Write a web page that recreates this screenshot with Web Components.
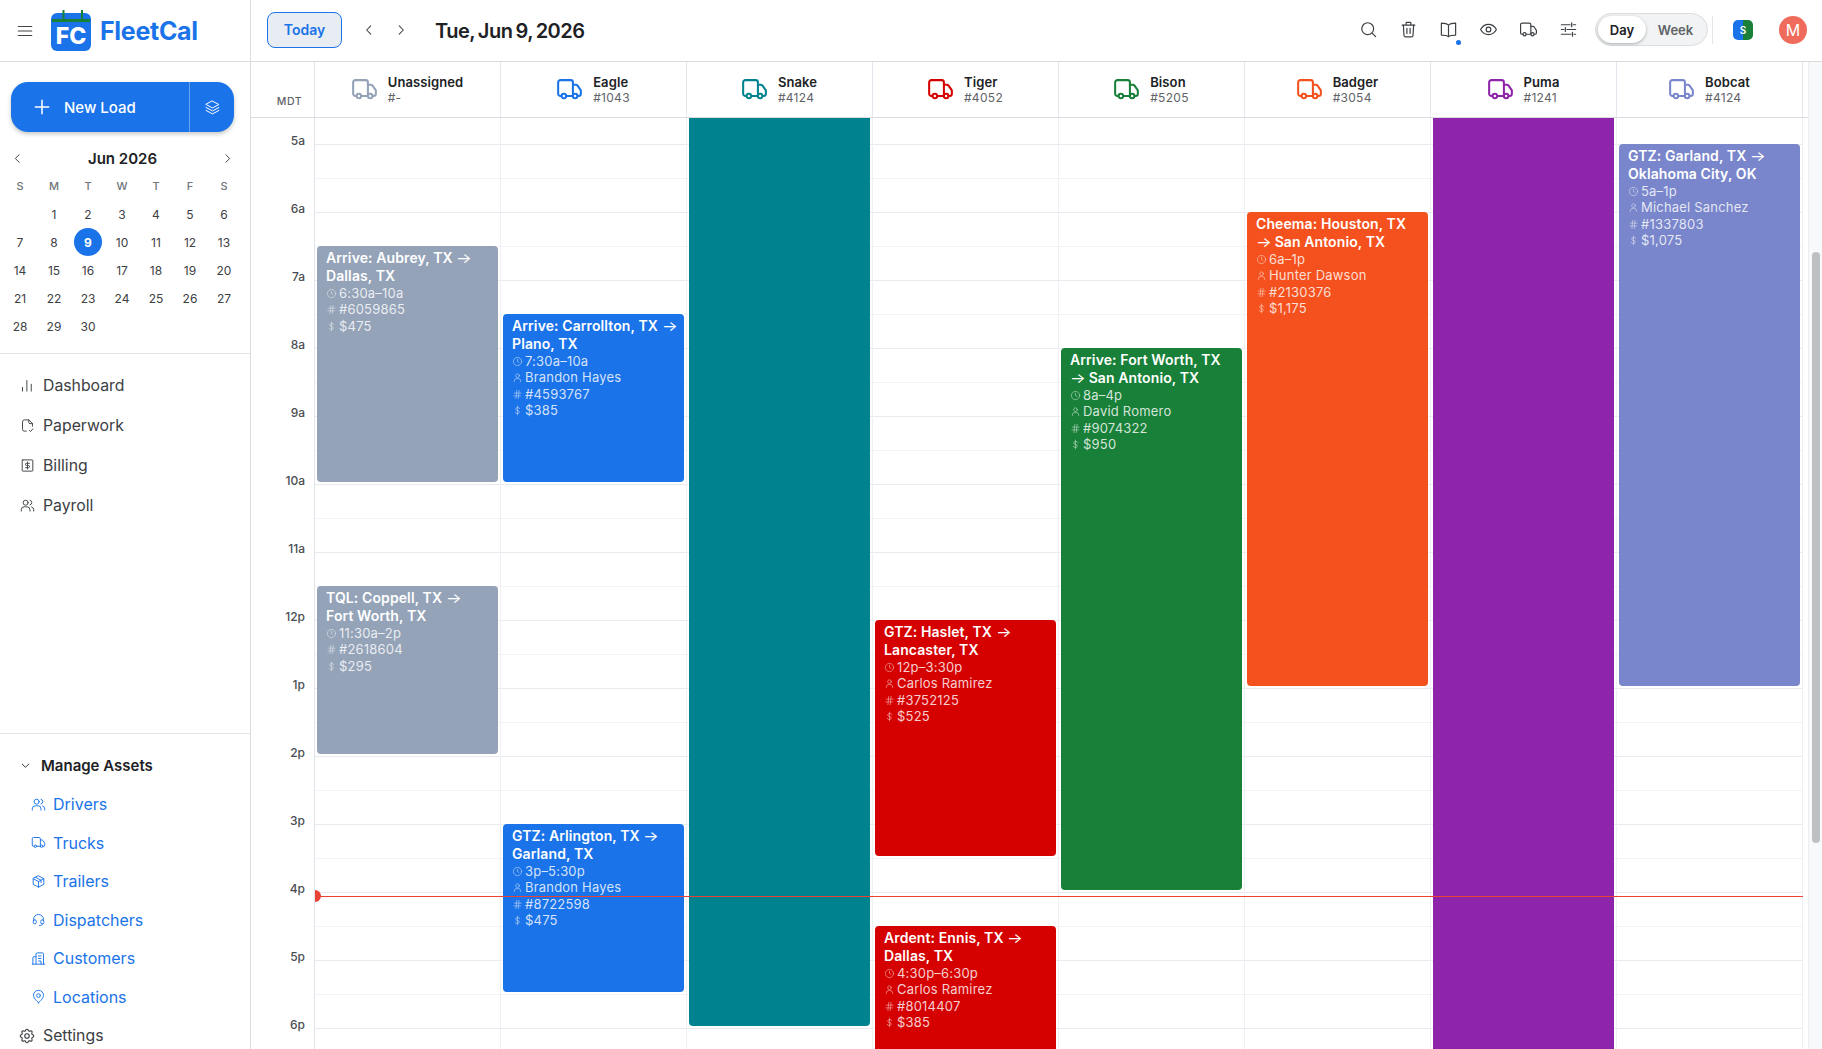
<!DOCTYPE html>
<html lang="en">
<head>
<meta charset="utf-8">
<title>FleetCal</title>
<style>
  html, body { margin: 0; height: 100%; overflow: hidden; background: #fff; }
  body { font-family: Inter, "Liberation Sans", sans-serif; color: #202124; }
</style>
</head>
<body>
<fleet-app></fleet-app>

<script>
const BLUE = "#1a73e8";

const ICONS = {
  menu: '<path d="M3 6h18M3 12h18M3 18h18"/>',
  plus: '<path d="M12 4v16M4 12h16"/>',
  layers: '<path d="M12 3l9 4.8-9 4.8-9-4.8z"/><path d="M3 12l9 4.8 9-4.8"/><path d="M3 16.2L12 21l9-4.8"/>',
  left: '<path d="M15 5l-7 7 7 7"/>',
  right: '<path d="M9 5l7 7-7 7"/>',
  down: '<path d="M5 9l7 7 7-7"/>',
  chart: '<path d="M4 21v-6M11 21V4M18 21V10"/>',
  paper: '<path d="M10 21H7a3 3 0 0 1-3-3V6a3 3 0 0 1 3-3h7l6 6v4"/><path d="M14 3v4a2 2 0 0 0 2 2h4"/><path d="M15 20l2 1.5 3.500-4"/>',
  bill: '<rect x="3.500" y="3" width="17" height="18" rx="1"/><path d="M15 8.500h-4.500a1.700 1.700 0 0 0 0 3.500h3a1.700 1.700 0 0 1 0 3.500H9M12 6.500v11"/>',
  users: '<circle cx="9" cy="7.500" r="4"/><path d="M2 21v-2a5 5 0 0 1 5-5h4a5 5 0 0 1 5 5v2"/><path d="M16 3.500a4 4 0 0 1 0 7.700M22 21v-2a5 5 0 0 0-3.500-4.800"/>',
  truck: '<path d="M5 18H4a2 2 0 0 1-2-2V6a2 2 0 0 1 2-2h9a2 2 0 0 1 2 2v12M9 18h6"/><path d="M15 8h2.500a2 2 0 0 1 1.600.8L22 13v3a2 2 0 0 1-2 2h-1"/><circle cx="7" cy="18" r="2"/><circle cx="17" cy="18" r="2"/>',
  box: '<path d="M12 3l8.500 4.500v9L12 21l-8.500-4.500v-9z"/><path d="M3.500 7.500L12 12l8.500-4.500M12 12v9M7.500 5.300l8.500 4.600v4"/>',
  headset: '<path d="M4 14v-2a8 8 0 0 1 16 0v2"/><rect x="3.500" y="12.500" width="5" height="6.500" rx="2.500"/><rect x="15.500" y="12.500" width="5" height="6.500" rx="2.500"/><path d="M19 19c0 1.800-2.500 2.500-5.500 2.500"/>',
  building: '<path d="M8 21V5a2 2 0 0 1 2-2h8a2 2 0 0 1 2 2v16"/><path d="M3 21V11a2 2 0 0 1 2-2h3M2 21h20M12 8h4M12 12h4M12 16h4v5"/>',
  pin: '<circle cx="12" cy="10.500" r="3"/><path d="M12 22s-8-6.500-8-12a8 8 0 0 1 16 0c0 5.500-8 12-8 12z"/>',
  gear: '<path d="M10.325 4.317c.426-1.756 2.924-1.756 3.35 0a1.724 1.724 0 0 0 2.573 1.066c1.543-.94 3.31.826 2.37 2.37a1.724 1.724 0 0 0 1.065 2.572c1.756.426 1.756 2.924 0 3.35a1.724 1.724 0 0 0-1.066 2.573c.94 1.543-.826 3.31-2.37 2.37a1.724 1.724 0 0 0-2.572 1.065c-.426 1.756-2.924 1.756-3.35 0a1.724 1.724 0 0 0-2.573-1.066c-1.543.94-3.31-.826-2.37-2.37a1.724 1.724 0 0 0-1.065-2.572c-1.756-.426-1.756-2.924 0-3.35a1.724 1.724 0 0 0 1.066-2.573c-.94-1.543.826-3.31 2.37-2.37c1 .608 2.296.07 2.572-1.065z"/><circle cx="12" cy="12" r="3"/>',
  search: '<circle cx="11" cy="11" r="7.500"/><path d="M16.500 16.500L21 21"/>',
  trash: '<path d="M4 6.500h16M9 6V4a1 1 0 0 1 1-1h4a1 1 0 0 1 1 1v2"/><path d="M5.500 6.500l.8 13a2 2 0 0 0 2 1.800h7.400a2 2 0 0 0 2-1.800l.8-13"/><path d="M10 10.500v6.500M14 10.500v6.500"/>',
  book: '<path d="M12 6.500C10.500 5 8 4 3 4v15c5 0 7.500.8 9 2 1.500-1.200 4-2 9-2V4c-5 0-7.500 1-9 2.500zM12 6.500V21"/>',
  eye: '<circle cx="12" cy="12" r="3"/><path d="M2 12c2.500-4.500 6-6.500 10-6.500s7.500 2 10 6.500c-2.500 4.500-6 6.500-10 6.500S4.500 16.500 2 12z"/>',
  sliders: '<path d="M3 6h11M18 6h3M3 12h3M10 12h11M3 18h12M19 18h2"/><path d="M16 3.500v5M8 9.500v5M17 15.500v5"/>',
  clock: '<circle cx="12" cy="12" r="9"/><path d="M12 7v5l3 2"/>',
  user: '<circle cx="12" cy="8" r="4"/><path d="M5 21v-1a6 6 0 0 1 6-6h2a6 6 0 0 1 6 6v1"/>',
  hash: '<path d="M5 9h15M4 15h15M10.500 3L8.500 21M15.500 3l-2 18"/>',
  dollar: '<path d="M17 8a4 3.500 0 0 0-4-2.500h-2A3.300 3.300 0 0 0 11 12h2a3.300 3.300 0 0 1 0 6.500h-2A4 3.500 0 0 1 7 16M12 2.500v19"/>'
};

function icon(name, size, stroke) {
  return `<svg width="${size}" height="${size}" viewBox="0 0 24 24" fill="none" stroke="currentColor" stroke-width="${stroke || 1.7}" stroke-linecap="round" stroke-linejoin="round" aria-hidden="true">${ICONS[name]}</svg>`;
}

// sidebar link, tone="asset" is the blue indented kind
class NavLink extends HTMLElement {
  connectedCallback() {
    this.attachShadow({ mode: "open" });
    const name = this.getAttribute("icon");
    this.shadowRoot.innerHTML = `
      <style>
        :host { display: flex; align-items: center; height: 40px; padding-left: 20px; gap: 8px; font-size: 15.800px; color: #3c4043; }
        :host([tone="asset"]) { height: 38.500px; padding-left: 31px; gap: 7px; font-size: 16px; color: ${BLUE}; }
        svg { flex: none; }
        :host([icon="gear"]) svg { margin: 0 -.500px 0 -2.500px; }
      </style>
      ${icon(name, name === "gear" ? 18 : 15, 1.5)}
      <slot></slot>
    `;
  }
}

class MiniCalendar extends HTMLElement {
  connectedCallback() {
    this.attachShadow({ mode: "open" });
    const week = ["S", "M", "T", "W", "T", "F", "S"].map((d) => `<span class="wd">${d}</span>`).join("");
    let days = "<span></span>";
    for (let d = 1; d <= 30; d++) {
      days += `<span class="${d === 9 ? "day today" : "day"}">${d}</span>`;
    }
    this.shadowRoot.innerHTML = `
      <style>
        :host { display: block; padding: 12px 3px 14px; border-bottom: 1px solid #e3e5e8; height: 195px; box-sizing: content-box; }
        .head { display: flex; align-items: center; justify-content: space-between; width: 225px; height: 28px; margin-left: 8px; color: #3c4043; }
        .head svg:last-child { margin-right: 2px; }
        .title { font-size: 15px; font-weight: 600; color: #202124; }
        .grid { display: grid; grid-template-columns: repeat(7, 34px); grid-auto-rows: 28px; justify-items: center; align-items: center; font-size: 12px; }
        .wd { font-size: 11px; font-weight: 500; color: #70757a; }
        .day { color: #3c4043; }
        .today { width: 28px; height: 28px; border-radius: 50%; background: ${BLUE}; color: #fff; font-weight: 700; display: flex; align-items: center; justify-content: center; }
      </style>
      <div class="head">
        ${icon("left", 13, 1.8)}
        <span class="title">Jun 2026</span>
        ${icon("right", 13, 1.8)}
      </div>
      <div class="grid">${week}${days}</div>
    `;
  }
}

class FleetSidebar extends HTMLElement {
  connectedCallback() {
    this.attachShadow({ mode: "open" });
    this.shadowRoot.innerHTML = `
      <style>
        :host { display: block; flex: none; box-sizing: border-box; width: 251px; height: 100vh; border-right: 1px solid #dadce0; overflow: hidden; background: #fff; }
        .brand { display: flex; align-items: center; height: 61px; border-bottom: 1px solid #dadce0; padding-left: 16px; }
        .brand .burger { color: #444; display: flex; margin-right: 16px; }
        .brand .name { margin-left: 8px; font-size: 25px; font-weight: 700; color: ${BLUE}; letter-spacing: -.3px; }
        .new { display: flex; align-items: stretch; height: 50px; margin: 20px 16px 0 11px; border-radius: 17px; background: ${BLUE}; color: #fff; box-shadow: 0 2px 4px rgba(60,64,67,.3); }
        .new .main { flex: 1; display: flex; align-items: center; gap: 12px; padding-left: 21px; font-size: 15px; font-weight: 500; }
        .new .side { width: 44px; border-left: 1px solid rgba(255,255,255,.35); display: flex; align-items: center; justify-content: center; }
        .links { height: 368px; padding-top: 11px; border-bottom: 1px solid #e3e5e8; box-sizing: content-box; }
        .group { display: flex; align-items: center; gap: 10px; height: 38px; margin: 12px 0 .800px; padding-left: 20px; font-size: 15px; font-weight: 600; color: #202124; }
      </style>
      <div class="brand">
        <span class="burger">${icon("menu", 18, 1.500)}</span>
        <svg width="42" height="42" viewBox="0 0 42 42" aria-hidden="true">
          <rect x="1" y="3" width="40" height="38" rx="6" fill="${BLUE}"/>
          <rect x="2" y="9" width="38" height="3" fill="#188038"/>
          <rect x="12.500" y="0" width="2" height="11" fill="#188038"/>
          <rect x="31" y="0" width="2" height="11" fill="#188038"/>
          <text x="21" y="34" text-anchor="middle" font-family="Inter, sans-serif" font-size="23" font-weight="800" fill="#fff">FC</text>
        </svg>
        <span class="name">FleetCal</span>
      </div>
      <div class="new">
        <div class="main">${icon("plus", 20, 1.8)}<span>New Load</span></div>
        <div class="side">${icon("layers", 17, 1.4)}</div>
      </div>
      <mini-calendar></mini-calendar>
      <div class="links">
        <nav-link icon="chart">Dashboard</nav-link>
        <nav-link icon="paper">Paperwork</nav-link>
        <nav-link icon="bill">Billing</nav-link>
        <nav-link icon="users">Payroll</nav-link>
      </div>
      <div class="group">${icon("down", 11, 2)}<span>Manage Assets</span></div>
      <nav-link tone="asset" icon="users">Drivers</nav-link>
      <nav-link tone="asset" icon="truck">Trucks</nav-link>
      <nav-link tone="asset" icon="box">Trailers</nav-link>
      <nav-link tone="asset" icon="headset">Dispatchers</nav-link>
      <nav-link tone="asset" icon="building">Customers</nav-link>
      <nav-link tone="asset" icon="pin">Locations</nav-link>
      <nav-link icon="gear">Settings</nav-link>
    `;
  }
}

class TopBar extends HTMLElement {
  connectedCallback() {
    this.attachShadow({ mode: "open" });
    const tools = ["search", "trash", "book", "eye", "truck", "sliders"]
      .map((n) => `<span class="tool">${icon(n, 19, 1.500)}${n === "book" ? '<i class="dot"></i>' : ""}</span>`)
      .join("");
    this.shadowRoot.innerHTML = `
      <style>
        :host { display: flex; align-items: center; flex: none; height: 62px; box-sizing: border-box; border-bottom: 1px solid #dadce0; padding: 0 0 2px 16px; background: #fff; }
        .today { box-sizing: border-box; width: 75px; height: 36px; border: 1px solid ${BLUE}; border-radius: 8px; background: #e8edf3; color: ${BLUE}; font-size: 14px; font-weight: 600; display: flex; align-items: center; justify-content: center; }
        .arrow { display: flex; width: 32px; justify-content: center; color: #3c4043; }
        .arrows { display: flex; margin: 0 18px 0 11px; }
        .date { margin-top: 2px; font-size: 20px; font-weight: 600; color: #202124; letter-spacing: -.5px; word-spacing: -1.500px; white-space: nowrap; }
        .tools { margin-left: auto; display: flex; align-items: center; color: #3c4043; }
        .tool { position: relative; display: flex; width: 40px; justify-content: center; }
        .dot { position: absolute; right: 7px; top: 20px; width: 5px; height: 5px; border-radius: 50%; background: ${BLUE}; }
        .pill { box-sizing: border-box; display: flex; align-items: center; width: 113px; height: 33px; margin-left: 7px; padding: 2px; border: 1px solid #dadce0; border-radius: 17px; background: #f1f3f4; font-size: 13px; font-weight: 600; color: #5f6368; }
        .pill span { display: flex; align-items: center; justify-content: center; height: 27px; }
        .pill .on { width: 48px; border-radius: 14px; background: #fff; color: #202124; box-shadow: 0 1px 3px rgba(60,64,67,.4); }
        .pill .off { flex: 1; }
        .rule { width: 1px; height: 28px; margin: 0 20px 0 4px; background: #e3e5e8; }
        .s { width: 20px; height: 20px; border-radius: 5px; background: linear-gradient(90deg, ${BLUE} 50%, #188038 50%); color: #fff; font-size: 10px; font-weight: 600; display: flex; align-items: center; justify-content: center; }
        .me { width: 28px; height: 28px; margin: 0 15px 0 26px; border-radius: 50%; background: #ef6b5b; color: #fff; font-size: 16px; display: flex; align-items: center; justify-content: center; }
      </style>
      <div class="today">Today</div>
      <div class="arrows">
        <span class="arrow">${icon("left", 14, 1.8)}</span>
        <span class="arrow">${icon("right", 14, 1.8)}</span>
      </div>
      <div class="date">Tue, Jun 9, 2026</div>
      <div class="tools">
        ${tools}
        <div class="pill"><span class="on">Day</span><span class="off">Week</span></div>
        <div class="rule"></div>
        <div class="s">S</div>
        <div class="me">M</div>
      </div>
    `;
  }
}

class TruckHead extends HTMLElement {
  connectedCallback() {
    this.attachShadow({ mode: "open" });
    this.shadowRoot.innerHTML = `
      <style>
        :host { display: flex; align-items: center; justify-content: center; gap: 11px; border-right: 1px solid #e3e6ec; }
        svg { flex: none; }
        .name { font-size: 13px; font-weight: 600; line-height: 16px; color: #202124; letter-spacing: .1px; }
        .num { font-size: 12px; line-height: 16px; color: #5f6368; letter-spacing: .3px; }
      </style>
      <svg width="25" height="21" viewBox="1 3 22 18.500" fill="none" stroke="${this.getAttribute("color")}" stroke-width="1.800" stroke-linecap="round" stroke-linejoin="round" aria-hidden="true">${ICONS.truck}</svg>
      <div>
        <div class="name">${this.getAttribute("name")}</div>
        <div class="num">${this.getAttribute("num")}</div>
      </div>
    `;
  }
}

// start/end are hours from midnight, the lane has one row per half hour
class LoadCard extends HTMLElement {
  connectedCallback() {
    this.attachShadow({ mode: "open" });
    const start = parseFloat(this.getAttribute("start"));
    const end = parseFloat(this.getAttribute("end"));
    this.style.gridRow = `${start * 2 + 1} / ${end * 2 + 1}`;
    const row = (name, value) => value ? `<div class="row">${icon(name, 11, 1.6)}<span>${value}</span></div>` : "";
    this.shadowRoot.innerHTML = `
      <style>
        :host { display: block; min-height: 0; margin-bottom: 2px; border-radius: 4px; overflow: hidden; background: var(--lane); color: #fff; padding: 3px 6px 3px 9px; box-sizing: border-box; }
        .title { font-size: 14px; font-weight: 600; line-height: 18px; letter-spacing: .1px; }
        .row { display: flex; align-items: center; gap: 2px; font-size: 13px; line-height: 16.400px; color: rgba(255,255,255,.82); letter-spacing: .2px; white-space: nowrap; }
        svg { flex: none; opacity: .72; }
      </style>
      <div class="title"><slot></slot></div>
      ${row("clock", this.getAttribute("time"))}
      ${row("user", this.getAttribute("driver"))}
      ${row("hash", this.getAttribute("ref"))}
      ${row("dollar", this.getAttribute("pay"))}
    `;
  }
}

class TruckLane extends HTMLElement {
  connectedCallback() {
    this.attachShadow({ mode: "open" });
    this.shadowRoot.innerHTML = `
      <style>
        :host {
          display: grid;
          grid-template-rows: repeat(48, 34px);
          padding: 0 2px;
          border-right: 1px solid #eef0f4;
          background: repeating-linear-gradient(to bottom, #e8ebf0 0 1px, transparent 1px 34px, #f2f3f6 34px 35px, transparent 35px 68px);
        }
      </style>
      <slot></slot>
    `;
  }
}

class TimeGutter extends HTMLElement {
  connectedCallback() {
    this.attachShadow({ mode: "open" });
    let cells = "";
    for (let h = 1; h < 24; h++) {
      let label = "";
      if (h >= 5 && h <= 18) label = h < 12 ? h + "a" : h === 12 ? "12p" : (h - 12) + "p";
      cells += `<div class="cell"><span>${label}</span></div>`;
    }
    this.shadowRoot.innerHTML = `
      <style>
        :host { display: block; box-sizing: border-box; padding-top: 3px; border-right: 1px solid #dfe3ea; background: #fff; }
        .cell { box-sizing: border-box; height: 68px; padding-right: 9px; display: flex; justify-content: flex-end; align-items: flex-end; }
        span { font-size: 12px; line-height: 12px; font-weight: 500; color: #4a4d52; }
      </style>
      ${cells}
    `;
  }
}

class DayBoard extends HTMLElement {
  connectedCallback() {
    this.attachShadow({ mode: "open" });
    this.shadowRoot.innerHTML = `
      <style>
        :host { display: flex; flex: 1; min-height: 0; }
        .scroller { flex: 1; min-width: 0; overflow-y: auto; overflow-x: hidden; background: #fff; scrollbar-width: none; }
        .rail { flex: none; box-sizing: border-box; width: 14px; padding: 190px 2px 0 3px; background: #f8f9fa; border-left: 1px solid #eceef2; }
        .thumb { height: 591px; border-radius: 4px; background: #bdc1c1; }
        .head { position: sticky; top: 0; z-index: 3; box-sizing: border-box; display: grid; grid-template-columns: 64px repeat(8, 186px); height: 56px; border-bottom: 1px solid #dadce0; background: #fff; }
        .zone { border-right: 1px solid #dfe3ea; font-size: 10.500px; letter-spacing: .5px; color: #5f6368; display: flex; align-items: flex-end; justify-content: flex-end; padding: 0 12px 9px 0; font-weight: 500; }
        .body { position: relative; display: grid; grid-template-columns: 64px repeat(8, 186px); width: 1552px; }
        .now { position: absolute; z-index: 2; left: 64px; right: 0; top: 1092px; height: 1px; background: #ea4335; }
        .now::before { content: ""; position: absolute; left: 0; top: -6px; width: 6px; height: 12px; border-radius: 0 6px 6px 0; background: #ea4335; }
        .arr { display: inline-block; width: 15px; font-weight: 400; transform: scaleX(1.180); transform-origin: left center; }
      </style>
      <div class="scroller">
        <div class="head">
          <div class="zone">MDT</div>
          <truck-head name="Unassigned" num="#-" color="#94a3b8"></truck-head>
          <truck-head name="Eagle" num="#1043" color="#1a73e8"></truck-head>
          <truck-head name="Snake" num="#4124" color="#00838f"></truck-head>
          <truck-head name="Tiger" num="#4052" color="#d50000"></truck-head>
          <truck-head name="Bison" num="#5205" color="#188038"></truck-head>
          <truck-head name="Badger" num="#3054" color="#f4511e"></truck-head>
          <truck-head name="Puma" num="#1241" color="#8e24aa"></truck-head>
          <truck-head name="Bobcat" num="#4124" color="#7986cb"></truck-head>
        </div>
        <div class="body">
          <time-gutter></time-gutter>
          <truck-lane style="--lane:#94a3b8">
            <load-card start="6.5" end="10" time="6:30a–10a" ref="#6059865" pay="$475">Arrive: Aubrey, TX <span class="arr">→</span> Dallas, TX</load-card>
            <load-card start="11.5" end="14" time="11:30a–2p" ref="#2618604" pay="$295">TQL: Coppell, TX <span class="arr">→</span> Fort&nbsp;Worth, TX</load-card>
          </truck-lane>
          <truck-lane style="--lane:#1a73e8">
            <load-card start="7.5" end="10" time="7:30a–10a" driver="Brandon Hayes" ref="#4593767" pay="$385">Arrive: Carrollton, TX <span class="arr">→</span> Plano, TX</load-card>
            <load-card start="15" end="17.5" time="3p–5:30p" driver="Brandon Hayes" ref="#8722598" pay="$475">GTZ: Arlington, TX <span class="arr">→</span> Garland, TX</load-card>
          </truck-lane>
          <truck-lane style="--lane:#00838f">
            <load-card start="0" end="18"></load-card>
          </truck-lane>
          <truck-lane style="--lane:#d50000">
            <load-card start="12" end="15.5" time="12p–3:30p" driver="Carlos Ramirez" ref="#3752125" pay="$525">GTZ: Haslet, TX <span class="arr">→</span> Lancaster, TX</load-card>
            <load-card start="16.5" end="18.5" time="4:30p–6:30p" driver="Carlos Ramirez" ref="#8014407" pay="$385">Ardent: Ennis, TX <span class="arr">→</span> Dallas, TX</load-card>
          </truck-lane>
          <truck-lane style="--lane:#188038">
            <load-card start="8" end="16" time="8a–4p" driver="David Romero" ref="#9074322" pay="$950">Arrive: Fort Worth, TX <span class="arr">→</span> San Antonio, TX</load-card>
          </truck-lane>
          <truck-lane style="--lane:#f4511e">
            <load-card start="6" end="13" time="6a–1p" driver="Hunter Dawson" ref="#2130376" pay="$1,175">Cheema: Houston, TX <span class="arr">→</span> San Antonio, TX</load-card>
          </truck-lane>
          <truck-lane style="--lane:#8e24aa">
            <load-card start="0" end="23"></load-card>
          </truck-lane>
          <truck-lane style="--lane:#7986cb">
            <load-card start="5" end="13" time="5a–1p" driver="Michael Sanchez" ref="#1337803" pay="$1,075">GTZ: Garland, TX <span class="arr">→</span> Oklahoma City, OK</load-card>
          </truck-lane>
          <div class="now"></div>
        </div>
      </div>
      <div class="rail"><div class="thumb"></div></div>
    `;
    // opens scrolled so 5a sits just under the truck header
    this.shadowRoot.querySelector(".scroller").scrollTop = 314;
  }
}

class FleetApp extends HTMLElement {
  connectedCallback() {
    this.attachShadow({ mode: "open" });
    this.shadowRoot.innerHTML = `
      <style>
        :host { display: flex; height: 100vh; overflow: hidden; font-family: Inter, "Liberation Sans", sans-serif; }
        main { flex: 1; min-width: 0; display: flex; flex-direction: column; }
      </style>
      <fleet-sidebar></fleet-sidebar>
      <main>
        <top-bar></top-bar>
        <day-board></day-board>
      </main>
    `;
  }
}

customElements.define("nav-link", NavLink);
customElements.define("mini-calendar", MiniCalendar);
customElements.define("fleet-sidebar", FleetSidebar);
customElements.define("top-bar", TopBar);
customElements.define("truck-head", TruckHead);
customElements.define("load-card", LoadCard);
customElements.define("truck-lane", TruckLane);
customElements.define("time-gutter", TimeGutter);
customElements.define("day-board", DayBoard);
customElements.define("fleet-app", FleetApp);
</script>
</body>
</html>
